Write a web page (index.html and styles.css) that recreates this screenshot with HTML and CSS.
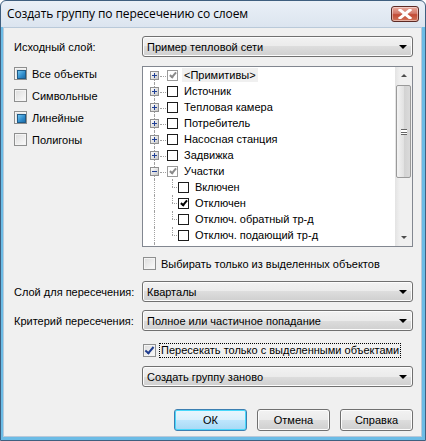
FILE: index.html
```html
<!DOCTYPE html>
<html lang="ru">
<head>
<meta charset="utf-8">
<title>Создать группу по пересечению со слоем</title>
<link rel="stylesheet" href="styles.css">
</head>
<body>
<div class="window">
  <div class="titlebar">
    <span class="title">Создать группу по пересечению со слоем</span>
    <div class="close">
      <svg width="14" height="10" viewBox="0 0 14 10"><path d="M2 1 L12 9 M12 1 L2 9" stroke="#fff" stroke-width="3" stroke-linecap="square"/></svg>
    </div>
  </div>
  <div class="frame">
    <div class="client">
      <div class="field-row first">
        <span class="label">Исходный слой:</span>
        <div class="combo"><span>Пример тепловой сети</span><i class="arrow"></i></div>
      </div>

      <div class="middle">
        <div class="filters">
          <div class="chk-row"><span class="cb ind"></span><span>Все объекты</span></div>
          <div class="chk-row"><span class="cb"></span><span>Символьные</span></div>
          <div class="chk-row"><span class="cb ind"></span><span>Линейные</span></div>
          <div class="chk-row"><span class="cb"></span><span>Полигоны</span></div>
        </div>
        <div class="tree">
          <div class="tree-items">
            <div class="node"><span class="exp plus"></span><span class="tcb gray"></span><span class="tl sel">&lt;Примитивы&gt;</span></div>
            <div class="node"><span class="exp plus"></span><span class="tcb"></span><span class="tl">Источник</span></div>
            <div class="node"><span class="exp plus"></span><span class="tcb"></span><span class="tl">Тепловая камера</span></div>
            <div class="node"><span class="exp plus"></span><span class="tcb"></span><span class="tl">Потребитель</span></div>
            <div class="node"><span class="exp plus"></span><span class="tcb"></span><span class="tl">Насосная станция</span></div>
            <div class="node"><span class="exp plus"></span><span class="tcb"></span><span class="tl">Задвижка</span></div>
            <div class="node"><span class="exp minus"></span><span class="tcb gray"></span><span class="tl">Участки</span></div>
            <div class="node child"><span class="hline"></span><span class="tcb"></span><span class="tl">Включен</span></div>
            <div class="node child"><span class="hline"></span><span class="tcb black"></span><span class="tl">Отключен</span></div>
            <div class="node child"><span class="hline"></span><span class="tcb"></span><span class="tl">Отключ. обратный тр-д</span></div>
            <div class="node child last"><span class="hline"></span><span class="tcb"></span><span class="tl">Отключ. подающий тр-д</span></div>
            <div class="node"><span class="exp plus"></span><span class="tcb"></span><span class="tl">Запорная арматура</span></div>
          </div>
          <div class="scrollbar">
            <div class="sb-btn"><i class="sb-up"></i></div>
            <div class="sb-track">
              <div class="sb-thumb"><i class="grip"></i></div>
            </div>
            <div class="sb-btn"><i class="sb-down"></i></div>
          </div>
        </div>
      </div>

      <div class="chk-row indent sel-only"><span class="cb"></span><span>Выбирать только из выделенных объектов</span></div>

      <div class="field-row r2">
        <span class="label">Слой для пересечения:</span>
        <div class="combo"><span>Кварталы</span><i class="arrow"></i></div>
      </div>
      <div class="field-row r3">
        <span class="label">Критерий пересечения:</span>
        <div class="combo"><span>Полное или частичное попадание</span><i class="arrow"></i></div>
      </div>

      <div class="chk-row indent inter"><span class="cb checked"></span><span class="focus">Пересекать только с выделенными объектами</span></div>

      <div class="field-row r4">
        <span class="label"></span>
        <div class="combo"><span>Создать группу заново</span><i class="arrow"></i></div>
      </div>

      <div class="buttons">
        <div class="btn default">ОК</div>
        <div class="btn">Отмена</div>
        <div class="btn">Справка</div>
      </div>
    </div>
  </div>
</div>
</body>
</html>
```

FILE: styles.css
```css
* { box-sizing: border-box; }
html, body { margin: 0; padding: 0; background: #fff; }
body { width: 426px; height: 441px; overflow: hidden; }

.window {
  width: 426px;
  height: 441px;
  border: 1px solid #3f5f7f;
  border-radius: 6px 6px 0 0;
  background: linear-gradient(#eaf0f7, #dbe4ef 27px, #dbe4ef);
  display: flex;
  flex-direction: column;
  font-family: "Liberation Sans", Arial, sans-serif;
  font-size: 11px;
  color: #000;
}

.titlebar {
  height: 26px;
  display: flex;
  align-items: center;
  justify-content: space-between;
  padding: 0 6px 2px 6px;
}
.title {
  font-family: "Open Sans", "Noto Sans", sans-serif;
  font-size: 12px;
  color: #000;
  letter-spacing: -0.1px;
}
.close {
  width: 28px;
  height: 16px;
  margin-top: 1px;
  border: 1px solid #5c2a25;
  border-radius: 3px;
  background: linear-gradient(#e9a99c, #d47a6b 45%, #c24a35 55%, #d1765c);
  box-shadow: inset 0 0 0 1px rgba(255,255,255,0.45);
  display: flex;
  align-items: center;
  justify-content: center;
}

.frame {
  flex: 1;
  border-left: 2px solid #6cbce6;
  border-right: 3px solid #6cbce6;
  border-bottom: 3px solid #6cbce6;
  display: flex;
}
.client {
  flex: 1;
  background: #f0f0f0;
  border: 1px solid #b9c9d9;
  padding: 8px 8px 0 10px;
  display: flex;
  flex-direction: column;
}

.field-row {
  display: flex;
  align-items: center;
  height: 21px;
}
.label {
  width: 128px;
  flex: none;
}
.combo {
  flex: 1;
  height: 21px;
  border: 1px solid #707070;
  border-radius: 3px;
  background: linear-gradient(#f2f2f2, #ebebeb 50%, #dddddd 50%, #cfcfcf);
  box-shadow: inset 0 0 0 1px #fcfcfc;
  display: flex;
  align-items: center;
  justify-content: space-between;
  padding: 0 5px 0 4px;
}
.arrow {
  width: 0; height: 0;
  border-left: 4px solid transparent;
  border-right: 4px solid transparent;
  border-top: 4px solid #000;
}

.middle {
  display: flex;
  margin-top: 9px;
  height: 181px;
}
.filters {
  width: 128px;
  flex: none;
  display: flex;
  flex-direction: column;
  gap: 9px;
  padding-top: 1px;
}
.filters .chk-row { height: 13px; }

.chk-row {
  display: flex;
  align-items: center;
  gap: 5px;
}
.cb {
  width: 13px;
  height: 13px;
  flex: none;
  border: 1px solid #8e8f8f;
  background: linear-gradient(135deg, #dcdcdc, #fbfbfb);
  box-shadow: inset 0 0 0 1px #f4f4f4;
  position: relative;
}
.cb.ind::after {
  content: "";
  position: absolute;
  left: 2px; top: 2px; width: 7px; height: 7px;
  border: 1px solid #1f5a86;
  background: linear-gradient(135deg, #6fc2ee, #2e8bcb 60%, #1f6ea8);
}
.cb.checked::after {
  content: "";
  position: absolute;
  left: 3px; top: 0px;
  width: 3px; height: 7px;
  border-right: 2px solid #1e3c8e;
  border-bottom: 2px solid #1e3c8e;
  transform: rotate(40deg);
}

.tree {
  flex: 1;
  border: 1px solid #828790;
  background: #fff;
  display: flex;
  overflow: hidden;
}
.tree-items {
  flex: 1;
  overflow: hidden;
  padding-left: 7px;
  position: relative;
}
.node {
  height: 16px;
  display: flex;
  align-items: center;
  position: relative;
  white-space: nowrap;
}
.node::before {
  content: "";
  position: absolute;
  left: 4px; top: 0; bottom: 0;
  border-left: 1px dotted #a0a0a0;
}
.node:first-child::before { top: 8px; }
.exp {
  width: 9px; height: 9px;
  flex: none;
  border: 1px solid #919191;
  background: linear-gradient(135deg, #fff, #c9c9c9);
  position: relative;
  z-index: 1;
}
.exp::before {
  content: "";
  position: absolute;
  left: 1px; top: 3px; width: 5px; height: 1px;
  background: #1f3f95;
}
.exp.plus::after {
  content: "";
  position: absolute;
  left: 3px; top: 1px; width: 1px; height: 5px;
  background: #1f3f95;
}
.exp + .tcb { margin-left: 8px; }
.node .exp + .tcb::before {
  content: "";
  position: absolute;
  left: -8px; top: 5px; width: 6px;
  border-top: 1px dotted #a0a0a0;
}
.tcb {
  width: 11px; height: 11px;
  flex: none;
  border: 1px solid #1c1c1c;
  background: #fff;
  position: relative;
}
.tcb.gray { border-color: #9a9a9a; }
.tcb.gray::after, .tcb.black::after {
  content: "";
  position: absolute;
  left: 3px; top: 0px;
  width: 2px; height: 5px;
  border-right: 2px solid #8a8a8a;
  border-bottom: 2px solid #8a8a8a;
  transform: rotate(40deg);
}
.tcb.black::after { border-color: #000; }
.tl {
  margin-left: 4px;
  padding: 1px 2px;
}
.tl.sel { background: #f0f0f0; }
.node.child { padding-left: 18px; }
.node.child::after {
  content: "";
  position: absolute;
  left: 22px; top: 0; height: 8px;
  border-left: 1px dotted #a0a0a0;
}
.hline {
  position: absolute;
  left: 22px; top: 8px; width: 7px;
  border-top: 1px dotted #a0a0a0;
}
.node.child .tcb { margin-left: 10px; }

.scrollbar {
  width: 17px;
  flex: none;
  background: linear-gradient(90deg, #e3e3e3, #f0f0f0 30%, #f0f0f0);
  display: flex;
  flex-direction: column;
}
.sb-btn {
  height: 17px;
  display: flex;
  align-items: center;
  justify-content: center;
}
.sb-up, .sb-down {
  width: 0; height: 0;
  border-left: 3px solid transparent;
  border-right: 3px solid transparent;
}
.sb-up { border-bottom: 3px solid #4d4d4d; }
.sb-down { border-top: 3px solid #4d4d4d; }
.sb-track { flex: 1; padding-top: 1px; }
.sb-thumb {
  height: 93px;
  margin-left: 1px;
  width: 15px;
  border: 1px solid #9a9a9a;
  border-radius: 2px;
  background: linear-gradient(90deg, #f3f3f3, #e2e2e2 50%, #d2d2d2 50%, #dadada);
  display: flex;
  align-items: center;
  justify-content: center;
}
.grip {
  width: 6px; height: 6px;
  border-top: 1px solid #666;
  border-bottom: 1px solid #666;
  background: linear-gradient(#fff 2px, #666 2px, #666 3px, #fff 3px);
}

.indent { margin-left: 129px; }
.sel-only { margin-top: 10px; height: 13px; }
.r2 { margin-top: 11px; }
.r3 { margin-top: 8px; }
.inter { margin-top: 12px; height: 14px; }
.focus {
  outline: 1px dotted #000;
  padding: 0 1px;
  line-height: 13px;
  margin-left: -1px;
}
.r4 { margin-top: 9px; }

.buttons {
  display: flex;
  justify-content: flex-end;
  gap: 10px;
  margin-top: 22px;
}
.btn {
  width: 73px;
  height: 22px;
  border: 1px solid #707070;
  border-radius: 3px;
  background: linear-gradient(#f2f2f2, #ebebeb 50%, #dddddd 50%, #cfcfcf);
  box-shadow: inset 0 0 0 1px #fcfcfc;
  display: flex;
  align-items: center;
  justify-content: center;
}
.btn.default {
  border-color: #3c7fb1;
  box-shadow: inset 0 0 0 1px #48d8fb;
  background: linear-gradient(#eaf6fd, #d9f0fc 50%, #bee6fd 50%, #a7d9f5);
}
```
